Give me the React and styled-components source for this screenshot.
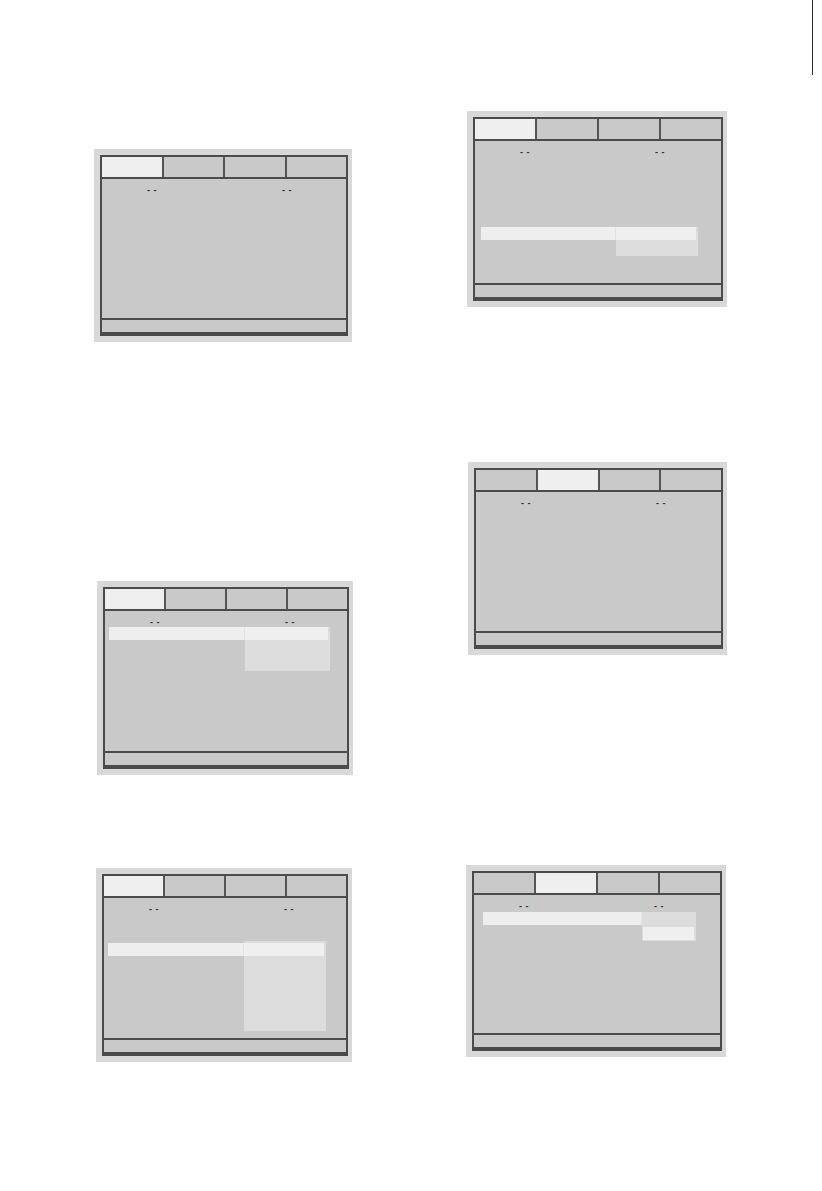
import React from "react";
import styled, { createGlobalStyle } from "styled-components";

const Global = createGlobalStyle`
  html, body { margin: 0; padding: 0; background: #ffffff; }
  body { font-family: "Liberation Sans", Arial, sans-serif; }
`;

const Page = styled.div`
  width: 822px;
  height: 1191px;
  overflow: hidden;
  display: flex;
  flex-direction: row;
  align-items: flex-start;
  background: #ffffff;
`;

const Column = styled.div`
  display: flex;
  flex-direction: column;
  margin-left: ${(p) => p.$left}px;
  width: 262px;
`;

const Rule = styled.div`
  margin-left: auto;
  margin-right: 9px;
  width: 1px;
  height: 75px;
  background: #2a2a2a;
`;

const Frame = styled.div`
  box-sizing: border-box;
  margin-top: ${(p) => p.$top}px;
  margin-left: ${(p) => p.$dx}px;
  width: ${(p) => p.$w}px;
  height: ${(p) => p.$h}px;
  padding: 6px 4px 6px 6px;
  background: #d8d8d8;
  display: flex;
`;

const Screen = styled.div`
  flex: 1;
  display: flex;
  flex-direction: column;
  background: #c9c9c9;
  border: 2px solid #4b4b4b;
  border-bottom-width: 4px;
`;

const TabBar = styled.div`
  display: flex;
  height: 20px;
  border-bottom: 2px solid #4b4b4b;
`;

const Tab = styled.div`
  flex: 1;
  background: ${(p) => (p.$active ? "#efefef" : "#c9c9c9")};
  border-left: ${(p) => (p.$first ? "none" : "2px solid #555555")};
`;

const Body = styled.div`
  flex: 1;
  display: flex;
  flex-direction: column;
  padding: 0 4px 0 0;
`;

const DotsRow = styled.div`
  height: 16px;
  display: flex;
  align-items: flex-end;
`;

const Dots = styled.span`
  margin-left: ${(p) => p.$x}px;
  font-size: 9px;
  line-height: 9px;
  font-weight: bold;
  color: #2e2e2e;
  letter-spacing: 0.5px;
  width: 12px;
`;

const MenuRow = styled.div`
  display: flex;
  align-items: flex-start;
  margin-top: ${(p) => p.$top}px;
  margin-left: ${(p) => p.$left}px;
`;

const Bar = styled.div`
  width: ${(p) => p.$w}px;
  height: 13px;
  background: #eeeeee;
  border-right: 1px solid #e2e2e2;
`;

const Dropdown = styled.div`
  width: ${(p) => p.$w}px;
  height: ${(p) => p.$h}px;
  margin-top: ${(p) => p.$off}px;
  padding-top: ${(p) => -p.$off}px;
  box-sizing: border-box;
  background: #dcdcdc;
  display: flex;
  flex-direction: column;
  gap: 2px;
  overflow: hidden;
`;

const Item = styled.div`
  flex: none;
  height: 13px;
  margin: 0 2px 0 ${(p) => (p.$inset ? 1 : 0)}px;
  background: ${(p) => (p.$hl ? "#efefef" : "transparent")};
`;

const Status = styled.div`
  height: 12px;
  border-top: 2px solid #4b4b4b;
  background: #c9c9c9;
`;

const panels = {
  left: [
    { top: 149, dx: 0, w: 258, h: 193, active: 0 },
    {
      top: 239, dx: 3, w: 256, h: 194, active: 0,
      menu: { top: 0, left: 4, bar: 135, drop: 85, dropH: 44, off: 0, hl: 0, items: 3 },
    },
    {
      top: 93, dx: 2, w: 256, h: 194, active: 0,
      menu: { top: 29, left: 4, bar: 135, drop: 82, dropH: 90, off: -2, hl: 0, items: 6 },
    },
  ],
  right: [
    {
      top: 111, dx: 0, w: 260, h: 196, active: 0,
      menu: { top: 70, left: 6, bar: 134, drop: 82, dropH: 29, off: 0, hl: 0, items: 2 },
    },
    { top: 155, dx: 1, w: 259, h: 193, active: 1 },
    {
      top: 210, dx: -1, w: 260, h: 192, active: 1,
      menu: { top: 1, left: 9, bar: 158, drop: 54, dropH: 29, off: 0, hl: 1, items: 2, inset: true },
    },
  ],
};

function Panel({ cfg }) {
  const { menu } = cfg;
  return (
    <Frame $top={cfg.top} $dx={cfg.dx} $w={cfg.w} $h={cfg.h}>
      <Screen>
        <TabBar>
          {[0, 1, 2, 3].map((i) => (
            <Tab key={i} $first={i === 0} $active={i === cfg.active} />
          ))}
        </TabBar>
        <Body>
          <DotsRow>
            <Dots $x={45}>- -</Dots>
            <Dots $x={123}>- -</Dots>
          </DotsRow>
          {menu && (
            <MenuRow $top={menu.top} $left={menu.left}>
              <Bar $w={menu.bar} />
              <Dropdown $w={menu.drop} $h={menu.dropH} $off={menu.off}>
                {Array.from({ length: menu.items }).map((_, i) => (
                  <Item key={i} $hl={i === menu.hl} $inset={menu.inset && i === menu.hl} />
                ))}
              </Dropdown>
            </MenuRow>
          )}
        </Body>
        <Status />
      </Screen>
    </Frame>
  );
}

export default function App() {
  return (
    <>
      <Global />
      <Page>
        <Column $left={94}>
          {panels.left.map((p, i) => (
            <Panel key={i} cfg={p} />
          ))}
        </Column>
        <Column $left={111}>
          {panels.right.map((p, i) => (
            <Panel key={i} cfg={p} />
          ))}
        </Column>
        <Rule />
      </Page>
    </>
  );
}
